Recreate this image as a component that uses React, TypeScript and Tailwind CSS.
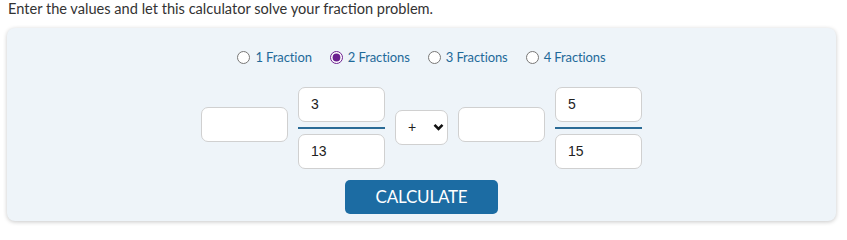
import React, { useState } from 'react'

const inputCls =
  'w-[87px] h-[35px] rounded-[7px] border border-[#d0d0d0] bg-white px-3 text-[14px] text-[#222] outline-none font-["Liberation_Sans",Arial,sans-serif]'

function FractionInput({ num, den }: { num: string; den: string }) {
  return (
    <div className="flex flex-col items-center gap-[5px]">
      <input className={inputCls} defaultValue={num} />
      <div className="h-[2px] w-[87px] bg-[#2a6b96]" />
      <input className={inputCls} defaultValue={den} />
    </div>
  )
}

export default function App() {
  const [count, setCount] = useState(2)
  const options = ['1 Fraction', '2 Fractions', '3 Fractions', '4 Fractions']

  return (
    <div className="w-[847px] h-[227px] bg-white font-['Lato',sans-serif]">
      <p className="pl-2 text-[14.6px] leading-[18px] text-[#333]">
        Enter the values and let this calculator solve your fraction problem.
      </p>

      <div className="ml-[7px] mt-[10px] w-[829px] h-[193px] rounded-[8px] bg-[#eef4f9] shadow-[0_1px_4px_rgba(0,0,0,0.22)] flex flex-col items-center">
        {/* Number of fractions */}
        <div className="mt-[20px] flex items-center gap-[18px] text-[13px] text-[#1f6a99]">
          {options.map((label, i) => (
            <label key={label} className="flex items-center gap-[5px] cursor-pointer">
              <input
                type="radio"
                name="count"
                checked={count === i + 1}
                onChange={() => setCount(i + 1)}
                className="m-0 h-[13px] w-[13px] accent-[#6b1f8f]"
              />
              <span className="tracking-[-0.1px]">{label}</span>
            </label>
          ))}
        </div>

        {/* Fraction inputs */}
        <div className="mt-[19px] flex items-center gap-[10px]">
          <input className={inputCls + ' mt-[-6px]'} />
          <FractionInput num="3" den="13" />
          <div className="relative">
            <select className="appearance-none w-[53px] h-[35px] rounded-[7px] border border-[#d0d0d0] bg-white pl-[12px] text-[14px] text-[#222] outline-none font-['Liberation_Sans',Arial,sans-serif]">
              <option>+</option>
              <option>-</option>
              <option>×</option>
              <option>÷</option>
            </select>
            <svg
              className="pointer-events-none absolute right-[4px] top-[13px]"
              width="11"
              height="8"
              viewBox="0 0 11 8"
            >
              <path d="M1.5 1.8 L5.5 5.8 L9.5 1.8" fill="none" stroke="#111" strokeWidth="2.6" />
            </svg>
          </div>
          <input className={inputCls + ' mt-[-6px]'} />
          <FractionInput num="5" den="15" />
        </div>

        <button className="mt-[11px] w-[153px] h-[34px] rounded-[5px] bg-[#1c6ca3] text-white text-[17px] tracking-[-0.2px]">
          CALCULATE
        </button>
      </div>
    </div>
  )
}
